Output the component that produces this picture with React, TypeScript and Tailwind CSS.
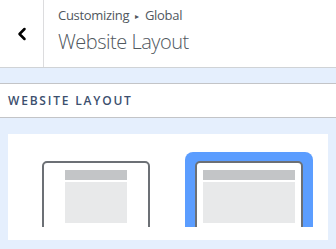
import { ChevronLeft } from "lucide-react"

function Thumb({ wide }: { wide?: boolean }) {
  return (
    <div className="h-[66px] w-[108px] overflow-hidden">
      <div className="flex h-[80px] w-[108px] justify-center rounded-[5px] border-2 border-[#6c7075] bg-white pt-[7px]">
        <div className={wide ? "w-[92px]" : "w-[62px]"}>
          <div className="h-[10px] bg-[#c3c5c7]" />
          <div className="mt-[2px] h-[41px] bg-[#e8e9ea]" />
        </div>
      </div>
    </div>
  )
}

export default function App() {
  return (
    <div
      className="h-[249px] w-[336px] overflow-hidden bg-[#e5effd]"
      style={{ fontFamily: '"Open Sans", "Noto Sans", sans-serif' }}
    >
      <div className="flex h-[68px] border-b border-[#d0d3d6] bg-white">
        <div className="flex w-[44px] items-center justify-center border-r border-[#dcdcde]">
          <ChevronLeft className="size-[20px] text-black" strokeWidth={3} />
        </div>
        <div className="pl-[14px] pt-[6px]">
          <div className="flex items-center text-[13px] tracking-[-0.3px] text-[#50575e]">
            <span>Customizing</span>
            <span className="mx-[6px] text-[8px]">▸</span>
            <span>Global</span>
          </div>
          <div className="mt-[3px] text-[20px] leading-[26px] tracking-[-0.5px] font-light text-[#50575e]">
            Website Layout
          </div>
        </div>
      </div>
      <div className="mt-[15px] flex h-[35px] items-center border-y border-[#c3c4c7] bg-white pl-[8px]">
        <span className="text-[12px] font-semibold tracking-[1.8px] text-[#3c4f6e]">
          WEBSITE LAYOUT
        </span>
      </div>
      <div className="mx-[8px] mt-[16px] flex h-[106px] items-start gap-[35px] bg-white pl-[34px] pt-[18px]">
        <div className="pt-[9px]">
          <Thumb />
        </div>
        <div className="rounded-t-[8px] bg-[#5b9dff] px-[10px] pt-[9px]">
          <Thumb wide />
        </div>
      </div>
    </div>
  )
}
